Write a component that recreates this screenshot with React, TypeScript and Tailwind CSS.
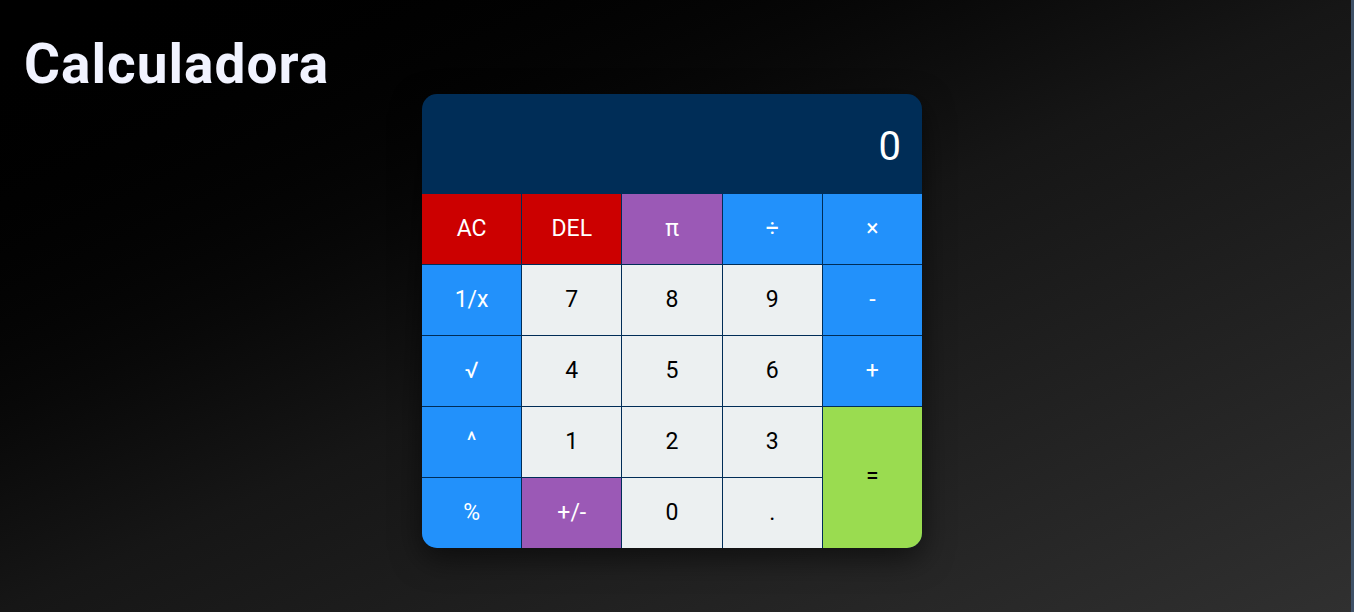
import React from "react";

type B = { label: string; cls: string };

const keys: B[] = [
  { label: "AC", cls: "bg-[#cc0000] text-white" },
  { label: "DEL", cls: "bg-[#cc0000] text-white" },
  { label: "π", cls: "bg-[#9b59b6] text-white" },
  { label: "÷", cls: "bg-[#2291fb] text-white" },
  { label: "×", cls: "bg-[#2291fb] text-white" },
  { label: "1/x", cls: "bg-[#2291fb] text-white" },
  { label: "7", cls: "bg-[#ecf0f1] text-black" },
  { label: "8", cls: "bg-[#ecf0f1] text-black" },
  { label: "9", cls: "bg-[#ecf0f1] text-black" },
  { label: "-", cls: "bg-[#2291fb] text-white" },
  { label: "√", cls: "bg-[#2291fb] text-white" },
  { label: "4", cls: "bg-[#ecf0f1] text-black" },
  { label: "5", cls: "bg-[#ecf0f1] text-black" },
  { label: "6", cls: "bg-[#ecf0f1] text-black" },
  { label: "+", cls: "bg-[#2291fb] text-white" },
  { label: "^", cls: "bg-[#2291fb] text-white" },
  { label: "1", cls: "bg-[#ecf0f1] text-black" },
  { label: "2", cls: "bg-[#ecf0f1] text-black" },
  { label: "3", cls: "bg-[#ecf0f1] text-black" },
  { label: "=", cls: "bg-[#9adc50] text-black row-span-2" },
  { label: "%", cls: "bg-[#2291fb] text-white" },
  { label: "+/-", cls: "bg-[#9b59b6] text-white" },
  { label: "0", cls: "bg-[#ecf0f1] text-black" },
  { label: ".", cls: "bg-[#ecf0f1] text-black" },
];

export default function App() {
  return (
    <div className="flex h-[612px] w-[1354px] overflow-hidden">
      <div className="flex-1 bg-gradient-to-br from-[#000000] via-[#161616] to-[#303030] font-['Roboto',sans-serif]">
        <h1 className="pl-6 pt-[35px] h-[94px] text-[55px] leading-[59px] font-bold text-[#f1f3ff] tracking-[1px]">
          Calculadora
        </h1>
        <div className="ml-[422px] w-[500px] rounded-[15px] overflow-hidden bg-[#002d57] shadow-[0_10px_30px_rgba(0,0,0,0.55)]">
          <div className="h-[100px] flex items-center justify-end pr-[21px] pt-[6px] text-white text-[40px] font-normal">
            0
          </div>
          <div className="grid grid-cols-5 grid-rows-[repeat(5,70px)] gap-px">
            {keys.map((k) => (
              <div
                key={k.label}
                className={`flex items-center justify-center text-[23px] ${k.cls}`}
              >
                {k.label}
              </div>
            ))}
          </div>
        </div>
      </div>
      <div className="w-[3px] bg-[#3f5268]" />
    </div>
  );
}
